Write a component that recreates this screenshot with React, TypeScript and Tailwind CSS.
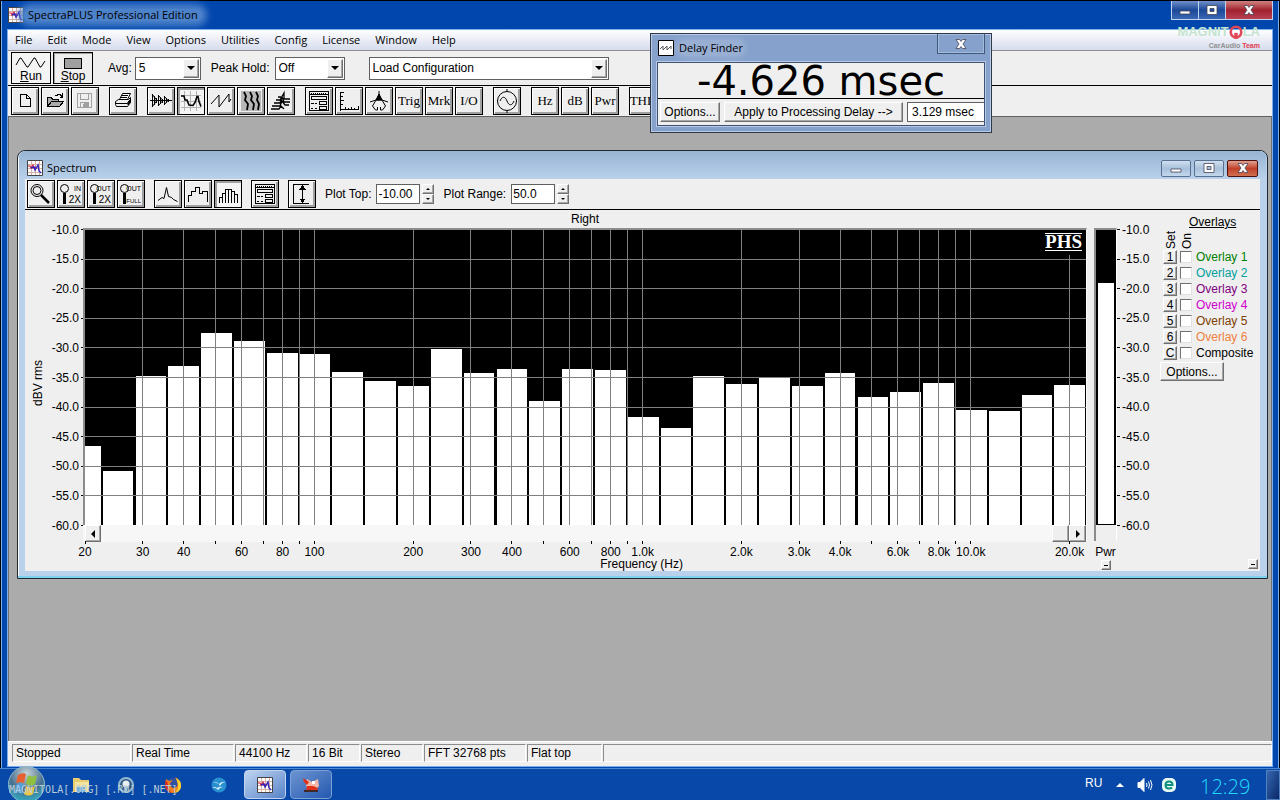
/**
 * @fileoverview Spectrum analyser desktop: main window, spectrum view and delay finder.
 */

import { Fragment } from 'react';
import type { ReactNode } from 'react';

const RAISED =
  'border border-black bg-[#efefef] shadow-[inset_1px_1px_0_#fff,inset_-2px_-2px_0_#a0a0a0] flex items-center justify-center';
const PRESSED =
  'border border-black bg-[#f4f4f4] shadow-[inset_2px_2px_0_#a0a0a0] flex items-center justify-center';
const SMALL_RAISED =
  'bg-[#efefef] border border-t-white border-l-white border-r-[#707070] border-b-[#707070] shadow-[inset_-1px_-1px_0_#a8a8a8] flex items-center justify-center';

/** Third-octave band levels in dBV, 20 Hz to 20 kHz. */
const LEVELS = [
  -46.6, -50.9, -34.8, -33.1, -27.5, -28.9, -30.9, -31.1, -34.1, -35.6, -36.6, -30.2, -34.3, -33.6,
  -39.0, -33.6, -33.9, -41.7, -43.6, -34.8, -36.1, -35.0, -36.5, -34.4, -38.3, -37.5, -36.0, -40.5,
  -40.7, -38.0, -36.3,
];

const DECADES = 3.05;
const DB_STEPS = [0, 1, 2, 3, 4, 5, 6, 7, 8, 9, 10];
const STEP_PX = 29.6;

const FREQS: number[] = [];
[10, 100, 1000, 10000].forEach((base) => {
  for (let n = 1; n < 10; n++) {
    const f = base * n;
    if (f >= 20 && f <= 20000) FREQS.push(f);
  }
});

const pct = (decades: number) => `${(decades / DECADES) * 100}%`;
const freqX = (f: number) => pct(Math.log10(f / 20));
const freqLabel = (f: number) => (f >= 1000 ? `${(f / 1000).toFixed(1)}k` : String(f));
const hasLabel = (f: number) => {
  const lead = Number(String(f)[0]);
  return lead !== 5 && lead !== 7 && lead !== 9;
};

const OVERLAYS = [
  { key: '1', name: 'Overlay 1', color: 'text-[#008000]' },
  { key: '2', name: 'Overlay 2', color: 'text-[#00a0a0]' },
  { key: '3', name: 'Overlay 3', color: 'text-[#800080]' },
  { key: '4', name: 'Overlay 4', color: 'text-[#d000d0]' },
  { key: '5', name: 'Overlay 5', color: 'text-[#804000]' },
  { key: '6', name: 'Overlay 6', color: 'text-[#f08040]' },
  { key: 'C', name: 'Composite', color: 'text-black' },
];

const MENUS = ['File', 'Edit', 'Mode', 'View', 'Options', 'Utilities', 'Config', 'License', 'Window', 'Help'];

const STATUS = [
  { text: 'Stopped', width: 'w-[119px]' },
  { text: 'Real Time', width: 'w-[102px]' },
  { text: '44100 Hz', width: 'w-[72px]' },
  { text: '16 Bit', width: 'w-[52px]' },
  { text: 'Stereo', width: 'w-[62px]' },
  { text: 'FFT 32768 pts', width: 'w-[102px]' },
  { text: 'Flat top', width: 'w-[75px]' },
  { text: '', width: 'flex-1' },
];

function Icon({ children }: { children: ReactNode }) {
  return (
    <svg
      viewBox="0 0 24 24"
      className="w-6 h-6 shrink-0"
      fill="none"
      stroke="#000"
      strokeWidth="1"
      shapeRendering="crispEdges"
      aria-hidden="true"
    >
      {children}
    </svg>
  );
}

interface Tool {
  label: string;
  icon?: ReactNode;
  pressed?: boolean;
}

const SettingsIcon = (
  <Icon>
    <path d="M2.5 2.5h19v19h-19zM2.5 5.5h19" />
    <path d="M4 4h16" strokeDasharray="1 1" />
    <path d="M4.5 7.5h15v3h-15zM12.5 12.5h7v3h-7zM12.5 17.5h7v3h-7z" />
    <path d="M4 14.5h3m1 0h2M4 19.5h2m2 0h2" />
  </Icon>
);

const MAIN_TOOLS: Tool[][] = [
  [
    { label: 'New', icon: <Icon><path d="M7.5 5.5h6l4 4v8h-10zM13.5 5.5v4h4" /></Icon> },
    {
      label: 'Open',
      icon: (
        <Icon>
          <path d="M4.5 17.5v-9h4l1 2h6v2M4.5 17.5l4-5h12l-4 5z" fill="#aaa" />
          <path d="M12 6.5h2l1-1h2l2 2M19.5 4v4h-3" />
        </Icon>
      ),
    },
    {
      label: 'Save',
      icon: (
        <Icon>
          <path d="M4.5 4.5h14v14h-14zM7.5 4.5v6h8v-6M7.5 18.5v-5h8v5M10.5 15v3" stroke="#a0a0a0" />
          <path d="M11 14h4v4h-4z" fill="#a0a0a0" stroke="none" />
        </Icon>
      ),
    },
  ],
  [
    {
      label: 'Print',
      icon: (
        <Icon>
          <g shapeRendering="auto">
            <path d="M8.5 10.5l3-6h8l-3 6" fill="#fff" />
            <path d="M4.5 12.5l3-2h10l2-2v5l-3 4h-11l-1-2zM4.5 14.5h12l3-4M11 6.5h6M10 8.5h6" />
            <path d="M17 13l2-2v3l-2 2z" fill="#000" />
          </g>
        </Icon>
      ),
    },
  ],
  [
    {
      label: 'Time series',
      icon: (
        <Icon>
          <path d="M1 11.5h22M3.5 5v13M5.5 7v9M7.5 9v5M9.5 6v11M11.5 8v7M13.5 9.500v4M15.5 7v9M17.5 9v5M19.5 10v3" />
          <path d="M3 5l5 6.500-5 6.500M9 6l5 5.500-5 5.500M15 7l4 4.500-4 4.500" shapeRendering="auto" />
        </Icon>
      ),
    },
    {
      label: 'Spectrum',
      pressed: true,
      icon: (
        <Icon>
          <path d="M2 6.5h20M2 12.5h20M2 18.5h20M5.5 2v20M11.5 2v20M17.5 2v20" stroke="#b4b4b4" />
          <path d="M2 7h3l1 4h2l2 5 4 .5 2-3 2-6 1 0 1 5 2 5" shapeRendering="auto" strokeWidth="1.600" />
        </Icon>
      ),
    },
    { label: 'Phase', icon: <Icon><path d="M2 15L10 6v12L20 5v8l2-3" shapeRendering="auto" /></Icon> },
    {
      label: 'Spectrogram',
      icon: (
        <Icon>
          <path d="M2 2h20v20H2z" fill="#b8b8b8" stroke="none" />
          <path
            d="M5 3l2 4-1 4 3 4-1 6M11 3l2 4-1 4 3 4-1 6M17 3l2 4-1 4 2 4-1 6"
            shapeRendering="auto"
            strokeWidth="1.800"
          />
        </Icon>
      ),
    },
    {
      label: '3-D surface',
      icon: (
        <Icon>
          <path
            d="M2 20h8l2-3 3 3M3 17h8l2-5 3 4h4M5 14h6l2-6 2 5h6M7 11h4l4-7v6h6M9 8h3"
            shapeRendering="auto"
            strokeWidth="1.300"
          />
        </Icon>
      ),
    },
  ],
  [
    { label: 'Processing settings', icon: SettingsIcon },
    {
      label: 'Scaling',
      icon: (
        <Icon>
          <path d="M3.5 3v18.500M4 3.500h3M4 7.500h2M4 11.500h3M4 15.500h2M4 20.500h18M8.500 18v2M11.500 19v1M14.500 18v2M17.500 19v1M21.500 17v3" />
        </Icon>
      ),
    },
    {
      label: 'Calibration',
      icon: (
        <Icon>
          <g shapeRendering="auto">
            <path d="M12 2v7M12 6L5.500 17l3 4h2v-3M12 6l6.500 11-3 4h-2v-3M3 13l6-2h6l6 2" />
            <path d="M12 5l3 6H9z" fill="#000" />
          </g>
        </Icon>
      ),
    },
    { label: 'Trig' },
    { label: 'Mrk' },
    { label: 'I/O' },
  ],
  [
    {
      label: 'Signal generator',
      icon: (
        <Icon>
          <g shapeRendering="auto">
            <circle cx="12" cy="12" r="9.500" />
            <path d="M12 0v2.500M12 21.500V24M5 12c2-5 5-5 7 0s5 5 7 0" />
          </g>
        </Icon>
      ),
    },
  ],
  [{ label: 'Hz' }, { label: 'dB' }, { label: 'Pwr' }],
  [{ label: 'THD' }],
];

/** Magnifier with a two-line caption, shared by the zoom buttons. */
function ZoomIcon({ top, bottom, small }: { top: string; bottom: string; small?: boolean }) {
  return (
    <Icon>
      <g shapeRendering="auto">
        <circle cx="5.500" cy="6.500" r="4" />
        <path d="M5.500 11v11" strokeWidth="3" />
      </g>
      <g stroke="none" fill="#000" fontFamily="Liberation Sans, sans-serif">
        <text x="22" y="9" fontSize="7" textAnchor="end">{top}</text>
        <text x="22" y="21" fontSize={small ? 6 : 10} textAnchor="end">{bottom}</text>
      </g>
    </Icon>
  );
}

const SPECTRUM_TOOLS: Tool[][] = [
  [
    {
      label: 'Zoom',
      icon: (
        <Icon>
          <g shapeRendering="auto">
            <circle cx="8" cy="8.500" r="6" />
            <circle cx="8" cy="8.500" r="4" />
            <path d="M12 13l8 8" strokeWidth="2.500" />
          </g>
        </Icon>
      ),
    },
    { label: 'Zoom in 2x', icon: <ZoomIcon top="IN" bottom="2X" /> },
    { label: 'Zoom out 2x', icon: <ZoomIcon top="OUT" bottom="2X" /> },
    { label: 'Zoom out full', icon: <ZoomIcon top="OUT" bottom="FULL" small /> },
  ],
  [
    {
      label: 'Line plot',
      icon: <Icon><path d="M2 18.500l4-3 2 1 2.500-11 2 9 3 1 2 2 4 2" shapeRendering="auto" /></Icon>,
    },
    { label: 'Step plot', icon: <Icon><path d="M2.500 20v-7h3v-4h4V5.500h4v6h3v-2h5V20" /></Icon> },
    {
      label: 'Bar plot',
      pressed: true,
      icon: <Icon><path d="M3.500 21v-6h3v6M6.500 15v-4h3v10M9.500 11V7.500h3V21M12.500 7.500h3V21M15.500 9.500h3V21M18.500 12.500h3V21" /></Icon>,
    },
  ],
  [{ label: 'Settings', icon: SettingsIcon }],
  [
    {
      label: 'Autoscale',
      icon: (
        <Icon>
          <path d="M3.500 2v20M3 2.500h16M3 21.500h16M12.500 3v18" />
          <path d="M10 7h5l-2.500-3zM10 17h5l-2.500 3z" fill="#000" />
        </Icon>
      ),
    },
  ],
];

function ToolGroups({ groups }: { groups: Tool[][] }) {
  return (
    <>
      {groups.map((group) => (
        <div key={group[0].label} className="flex gap-0.5">
          {group.map((tool) => (
            <button
              key={tool.label}
              type="button"
              aria-label={tool.label}
              className={`w-7 h-7 ${tool.pressed ? PRESSED : RAISED}`}
            >
              {tool.icon ?? (
                <span className="font-['Liberation_Serif',serif] text-[13px] leading-4">{tool.label}</span>
              )}
            </button>
          ))}
        </div>
      ))}
    </>
  );
}

function AppIcon() {
  return (
    <svg viewBox="0 0 16 16" className="w-4 h-4 shrink-0" aria-hidden="true">
      <path d="M.5.5h15v15H.5z" fill="#fff" stroke="#444" />
      <path d="M4.500 1v14M8.500 1v14M12.500 1v14M1 4.500h14M1 8.500h14M1 12.500h14" stroke="#d8b0a4" />
      <path d="M1 6h2l1 2 2-3 1 3 2-1" fill="none" stroke="#d02040" strokeWidth="1.200" />
      <path d="M4 8l3-1 1 3 3-5 1 6 2 2" fill="none" stroke="#3020c0" strokeWidth="1.400" />
    </svg>
  );
}

function Picker({ id, value, width }: { id: string; value: string; width: string }) {
  return (
    <div className={`relative h-[23px] ${width}`}>
      <select
        id={id}
        aria-label={value}
        defaultValue={value}
        className="appearance-none w-full h-full bg-white border border-[#606060] pl-[3px] pr-5 text-xs leading-4"
      >
        <option>{value}</option>
      </select>
      <span className={`absolute right-0.5 top-0.5 bottom-0.5 w-4 pointer-events-none ${SMALL_RAISED}`}>
        <svg viewBox="0 0 8 4" className="w-2 h-1" aria-hidden="true"><path d="M0 0h8L4 4z" /></svg>
      </span>
    </div>
  );
}

function Spinner({ id, label, value }: { id: string; label: string; value: string }) {
  return (
    <div className="flex items-center">
      <label htmlFor={id} className="mr-[5px]">{label}</label>
      <input id={id} defaultValue={value} className="w-11 h-5 bg-white border border-[#606060] pl-px text-xs" />
      <div className="ml-0.5 flex flex-col">
        <button type="button" aria-label={`${label} up`} className={`w-3 h-2.5 ${SMALL_RAISED}`}>
          <svg viewBox="0 0 4 2" className="w-1 h-0.5"><path d="M0 2h4L2 0z" /></svg>
        </button>
        <button type="button" aria-label={`${label} down`} className={`w-3 h-2.5 ${SMALL_RAISED}`}>
          <svg viewBox="0 0 4 2" className="w-1 h-0.5"><path d="M0 0h4L2 2z" /></svg>
        </button>
      </div>
    </div>
  );
}

function CaptionGlyph({ kind }: { kind: 'min' | 'max' | 'close' }) {
  return (
    <svg viewBox="0 0 14 12" className="w-3.5 h-3" aria-hidden="true">
      {kind === 'min' && <path d="M2 7h10v3H2z" fill="#fff" stroke="#445" strokeWidth=".8" />}
      {kind === 'max' && (
        <path d="M2 1.500h10v9H2zM5 4.500v3h4v-3z" fill="#fff" fillRule="evenodd" stroke="#445" strokeWidth=".8" />
      )}
      {kind === 'close' && (
        <path
          d="M2 1.500h3.500L7 3.500l1.500-2H12L9 6l3 4.500H8.500L7 8.500l-1.500 2H2L5 6z"
          fill="#fff"
          stroke="#445"
          strokeWidth=".8"
        />
      )}
    </svg>
  );
}

function DbAxis({ side }: { side: 'left' | 'right' }) {
  const left = side === 'left';
  return (
    <svg className={`shrink-0 h-[361px] text-xs ${left ? 'w-[58px]' : 'w-[43px]'}`}>
      {DB_STEPS.map((k) => {
        const y = 19.5 + k * STEP_PX;
        return (
          <Fragment key={k}>
            <line x1={left ? 56 : 0} x2={left ? 58 : 3} y1={y} y2={y} stroke="#000" shapeRendering="crispEdges" />
            <text x={left ? 54 : 5} y={y + 4} textAnchor={left ? 'end' : 'start'}>
              {`-${10 + k * 5}.0`}
            </text>
          </Fragment>
        );
      })}
      {left && (
        <text textAnchor="middle" transform="translate(17 173) rotate(-90)">
          dBV rms
        </text>
      )}
    </svg>
  );
}

/** Plot of band levels on a logarithmic frequency axis. */
function SpectrumPlot() {
  return (
    <div className="flex-1 min-w-0 flex flex-col">
      <div className="h-[18px] text-center leading-[18px]">Right</div>
      <div className="relative border-t-2 border-l-2 border-[#8c8c8c] border-r border-r-white">
        <svg className="block w-full h-[295px] bg-black" shapeRendering="crispEdges">
          {LEVELS.map((level, i) => {
            const from = i === 0 ? 0 : i * 0.1 - 0.046;
            const top = ((-10 - level) / 5) * STEP_PX - 1;
            return (
              <rect key={i} x={pct(from)} y={top} width={pct(i * 0.1 + 0.0475 - from)} height={296 - top} fill="#fff" />
            );
          })}
          {DB_STEPS.slice(1, 10).map((k) => (
            <line key={k} x1="0" x2="100%" y1={k * STEP_PX - 0.5} y2={k * STEP_PX - 0.5} stroke="#808080" />
          ))}
          {FREQS.slice(1).map((f) => (
            <line key={f} x1={freqX(f)} x2={freqX(f)} y1="0" y2="100%" stroke="#808080" />
          ))}
        </svg>
        <div className="absolute top-0 right-1 pt-[3px] pb-1 bg-black">
          <div className="border-y border-white text-white font-bold text-[19px] leading-4 font-['Liberation_Serif',serif]">
            PHS
          </div>
        </div>
      </div>
      <div className="flex h-[17px] pl-0.5 bg-[#f7f7f7]">
        <button type="button" aria-label="Scroll left" className={`w-4 ${SMALL_RAISED}`}>
          <svg viewBox="0 0 4 8" className="w-1 h-2"><path d="M4 0v8L0 4z" /></svg>
        </button>
        <button type="button" aria-label="Scroll position" className={`ml-auto w-[17px] ${SMALL_RAISED}`} />
        <button type="button" aria-label="Scroll right" className={`mr-px w-[17px] ${SMALL_RAISED}`}>
          <svg viewBox="0 0 4 8" className="w-1 h-2"><path d="M0 0v8l4-4z" /></svg>
        </button>
      </div>
      <div className="pl-0.5 pr-px">
        <svg className="block w-full h-[29px] overflow-visible text-xs">
          {FREQS.map((f) => (
            <Fragment key={f}>
              <line x1={freqX(f)} x2={freqX(f)} y1="-1" y2="2" stroke="#000" shapeRendering="crispEdges" />
              {hasLabel(f) && (
                <text x={freqX(f)} y="14" textAnchor="middle">
                  {freqLabel(f)}
                </text>
              )}
            </Fragment>
          ))}
          <text x="55.6%" y="26" textAnchor="middle">
            Frequency (Hz)
          </text>
        </svg>
      </div>
    </div>
  );
}

function PowerMeter() {
  return (
    <div className="ml-[7px] w-[23px] shrink-0 flex flex-col items-center pt-[18px]">
      <div className="w-full border-t-2 border-l-2 border-[#8c8c8c] border-r border-r-white">
        <div className="h-[295px] bg-black flex flex-col justify-end px-0.5 pb-px">
          <div className="bg-white h-[241px]" />
        </div>
        <div className="h-4" />
      </div>
      <div className="leading-4 mt-[3px]">Pwr</div>
      <button type="button" aria-label="Collapse power meter" className={`w-2.5 h-2.5 text-xs ${SMALL_RAISED}`}>
        <span className="w-1 h-px bg-black" />
      </button>
    </div>
  );
}

function OverlayPanel() {
  return (
    <aside className="w-[100px] shrink-0 flex flex-col">
      <div className="pt-1 pl-[29px] underline leading-4">Overlays</div>
      <div className="flex gap-1 h-[19px] pl-[5px] items-end text-xs leading-3">
        <span className="w-3 [writing-mode:vertical-rl] rotate-180">Set</span>
        <span className="w-3 [writing-mode:vertical-rl] rotate-180">On</span>
      </div>
      <ul>
        {OVERLAYS.map((o) => (
          <li key={o.key} className="flex items-center h-4 pl-[3px]">
            <button type="button" aria-label={`Set ${o.name}`} className={`w-3.5 h-3.5 text-xs ${SMALL_RAISED}`}>
              {o.key}
            </button>
            <input
              id={`overlay-${o.key}`}
              type="checkbox"
              className="appearance-none ml-[3px] w-3 h-3 bg-white border border-t-[#707070] border-l-[#707070] border-[#e0e0e0]"
            />
            <label htmlFor={`overlay-${o.key}`} className={`ml-1 ${o.color}`}>
              {o.name}
            </label>
          </li>
        ))}
      </ul>
      <button type="button" className={`mt-px w-16 h-[19px] ${SMALL_RAISED}`}>
        Options...
      </button>
      <button type="button" aria-label="Collapse overlays" className={`mt-auto mb-0.5 mr-0.5 self-end w-2.5 h-2.5 ${SMALL_RAISED}`}>
        <span className="w-1 h-px bg-black" />
      </button>
    </aside>
  );
}

function SpectrumWindow() {
  return (
    <section className="mt-[33px] ml-2 mr-[3px] rounded-t-lg border border-[#202830] bg-[#b9d1ea] px-[7px] pb-[7px] shadow-[inset_0_-2px_0_#7cd0f0,inset_1px_1px_0_#fff]">
      <header className="-mx-[6px] px-[8px] h-7 flex items-center gap-1 rounded-t-md bg-gradient-to-b from-[#98b4d4] to-[#b9d1ea]">
        <span className="pt-1.5"><AppIcon /></span>
        <h2 className="pt-1.5 font-['Open_Sans',sans-serif] text-[11px]">Spectrum</h2>
        <div className="ml-auto flex gap-[3px] pt-1.5">
          {(['min', 'max'] as const).map((kind) => (
            <button
              key={kind}
              type="button"
              aria-label={kind}
              className="w-[30px] h-[17px] flex items-center justify-center rounded-xs border border-[#5a7090] bg-gradient-to-b from-[#d0e0f0] via-[#a8c0dc] to-[#c4d8ec]"
            >
              <CaptionGlyph kind={kind} />
            </button>
          ))}
          <button
            type="button"
            aria-label="Close spectrum"
            className="w-[31px] h-[17px] flex items-center justify-center rounded-xs border border-[#501010] bg-gradient-to-b from-[#e0a090] via-[#c04028] to-[#d07050]"
          >
            <CaptionGlyph kind="close" />
          </button>
        </div>
      </header>
      <div className="bg-[#efefef]">
        <div className="flex items-center h-[31px] pl-[2px] gap-[9px] border-b border-black">
          <ToolGroups groups={SPECTRUM_TOOLS} />
          <Spinner id="plot-top" label="Plot Top:" value="-10.00" />
          <Spinner id="plot-range" label="Plot Range:" value="50.0" />
        </div>
        <div className="flex">
          <DbAxis side="left" />
          <SpectrumPlot />
          <PowerMeter />
          <DbAxis side="right" />
          <OverlayPanel />
        </div>
      </div>
    </section>
  );
}

function DelayFinder() {
  return (
    <section className="absolute left-[650px] top-[33px] w-[342px] border border-[#303848] bg-[#86a2cc] px-1.5 pb-1.5 shadow-[inset_0_0_0_1px_#b8cce8]">
      <header className="flex h-7 items-center gap-1 pl-px">
        <svg viewBox="0 0 16 16" className="w-4 h-4" aria-hidden="true">
          <path d="M.5.5h15v15H.5z" fill="#fff" stroke="#000" />
          <path d="M2 9l3-3v4l4-4v4l4-4v3" fill="none" stroke="#555" />
        </svg>
        <h2 className="px-px font-['Open_Sans',sans-serif] text-[11px] rounded-full bg-white/15 shadow-[0_0_6px_2px_rgba(255,255,255,0.15)]">
          Delay Finder
        </h2>
        <button
          type="button"
          aria-label="Close delay finder"
          className="ml-auto self-start w-12 h-5 flex items-center justify-center border border-t-0 border-[#40587c] shadow-[inset_0_0_0_1px_#a4bcdc]"
        >
          <CaptionGlyph kind="close" />
        </button>
      </header>
      <div className="bg-[#efefef] border border-[#405070] shadow-[0_0_0_1px_#b8cce8]">
        <div className="h-9 leading-9 text-center text-[40px] border-b border-black font-['DejaVu_Sans',sans-serif]">
          -4.626 msec
        </div>
        <div className="flex items-center gap-1 pl-0.5 h-[26px]">
          <button type="button" className={`w-[60px] h-5 ${SMALL_RAISED}`}>Options...</button>
          <button type="button" className={`flex-1 h-5 whitespace-nowrap ${SMALL_RAISED}`}>
            Apply to Processing Delay --&gt;
          </button>
          <input
            aria-label="Processing delay"
            defaultValue="3.129 msec"
            className="w-[77px] h-5 bg-white border border-[#606060] border-r-0 pl-1 text-xs"
          />
        </div>
      </div>
    </section>
  );
}

function TitleBar() {
  return (
    <header className="flex h-7 items-center pl-px">
      <AppIcon />
      <h1 className="px-1 font-['Open_Sans',sans-serif] text-[11px] leading-3 rounded-full bg-[#4c82ca] shadow-[0_0_7px_5px_#4c82ca]">
        SpectraPLUS Professional Edition
      </h1>
      <div className="ml-auto self-start flex border border-t-0 border-[#c0d4f0]">
        {(['min', 'max'] as const).map((kind) => (
          <button
            key={kind}
            type="button"
            aria-label={kind}
            className="w-[27px] h-[18px] flex items-center justify-center border-r border-[#c0d4f0] bg-gradient-to-b from-[#7090c8] via-[#1c4898] to-[#3868b4]"
          >
            <CaptionGlyph kind={kind} />
          </button>
        ))}
        <button
          type="button"
          aria-label="Close"
          className="w-[46px] h-[18px] flex items-center justify-center bg-gradient-to-b from-[#d08080] via-[#a02030] to-[#b84050]"
        >
          <CaptionGlyph kind="close" />
        </button>
      </div>
    </header>
  );
}

function Watermark() {
  return (
    <div className="absolute right-5 top-[22px] flex flex-col items-end pointer-events-none">
      <div className="flex items-center font-bold text-[13px] leading-5 text-[#c4e4d0]">
        MAGNIT
        <svg viewBox="0 0 16 16" className="w-3.5 h-4" aria-hidden="true">
          <circle cx="8" cy="8" r="6" fill="none" stroke="#e04858" strokeWidth="3" />
          <path d="M6 9h4v7H6z" fill="#e04858" />
        </svg>
        LA
      </div>
      <div className="text-[7px] leading-2 font-bold text-[#909090]">
        CarAudio <span className="text-[#e04050]">Team</span>
      </div>
    </div>
  );
}

function Taskbar() {
  return (
    <footer className="relative h-8 flex items-center bg-[#0848a8] border-t border-[#4c88d0] text-white">
      <button type="button" aria-label="Start" className="ml-2 w-[37px] h-[37px]">
        <svg viewBox="0 0 37 37" aria-hidden="true">
          <defs>
            <radialGradient id="orb" cx=".5" cy=".2" r=".8">
              <stop offset="0" stopColor="#c8d4d8" />
              <stop offset=".6" stopColor="#487090" />
              <stop offset="1" stopColor="#30b0c8" />
            </radialGradient>
          </defs>
          <circle cx="18.500" cy="18.500" r="18" fill="url(#orb)" stroke="#90b8c8" />
          <path d="M10 9q4-3 8-1l-2 9q-4-2-8 0z" fill="#e86030" />
          <path d="M20 9q4 3 9 0l-2 9q-4 3-9 0z" fill="#90c040" />
          <path d="M8 19q4-3 8 0l-2 9q-4-3-8 0z" fill="#50a0e0" />
          <path d="M18 20q4 3 9 0l-2 8q-4 3-9 0z" fill="#f0c840" />
        </svg>
      </button>
      <button type="button" aria-label="Explorer" className="ml-[27px]">
        <svg viewBox="0 0 18 18" className="w-[18px] h-[18px]" aria-hidden="true">
          <path d="M1 2h6l2 2h8v12H1z" fill="#e8cc70" />
          <path d="M3 6h14v10H3z" fill="#f4e4a0" />
          <path d="M5 11h8v5H5z" fill="#70b0e0" />
        </svg>
      </button>
      <button type="button" aria-label="Media" className="ml-[27px]">
        <svg viewBox="0 0 18 18" className="w-[18px] h-[18px]" aria-hidden="true">
          <circle cx="9" cy="9" r="7" fill="#305880" stroke="#90b8d0" strokeWidth="2" />
          <circle cx="9" cy="8" r="3.500" fill="#e8f0f4" />
          <path d="M7 10h4l-1 5H8z" fill="#b0c8d8" />
        </svg>
      </button>
      <button type="button" aria-label="Firefox" className="ml-[29px]">
        <svg viewBox="0 0 18 18" className="w-[18px] h-[18px]" aria-hidden="true">
          <circle cx="9" cy="9" r="7" fill="#3050a0" />
          <path d="M2 3l3 2 4-1-3 3q0 5 4 5 5-1 3-7l-2-4q6 3 6 9-1 7-8 7-8 0-8-9z" fill="#f08020" />
          <path d="M12 2q6 3 5 9-1 5-6 6 4-4 3-9z" fill="#f8d030" />
          <path d="M2 4q-3 7 3 12l3 1q-5-4-4-9z" fill="#d02828" />
        </svg>
      </button>
      <button type="button" aria-label="OpenOffice" className="ml-7">
        <svg viewBox="0 0 18 18" className="w-[18px] h-[18px]" aria-hidden="true">
          <circle cx="9" cy="9" r="7.500" fill="#2890d0" />
          <path d="M3 7q4-2 6 1 3-3 7-2-4 0-6 4-2-4-7-3zM2 12q3-2 5 0 3-2 6-1-3 0-5 3-2-3-6-2z" fill="#e0f4fc" />
        </svg>
      </button>
      <button type="button" aria-label="SpectraPLUS" className="ml-4 w-[42px] h-[29px] flex items-center justify-center rounded-sm border border-[#c0d4f0] bg-gradient-to-br from-[#c0d4f0] to-[#5884c8]">
        <AppIcon />
      </button>
      <button type="button" aria-label="Paint tool" className="ml-1 w-[42px] h-[29px] flex items-center justify-center rounded-sm border border-[#7ca0d8] bg-gradient-to-br from-[#6c94d0] to-[#2458b0]">
        <svg viewBox="0 0 18 18" className="w-[18px] h-[18px]" aria-hidden="true">
          <path d="M5 3l5 3 6-3 1 7-4 5H6L4 9z" fill="#f0b8a8" />
          <path d="M1 2l6 4-2 3-3-3zM5 10h6l5 2-1 3H4z" fill="#e03018" />
          <path d="M2 14h14v2H2z" fill="#402828" />
          <path d="M10 5h3v3h-3z" fill="#fff" />
        </svg>
      </button>
      <div className="ml-auto flex items-center">
        <span className="text-xs pb-1 w-[31px]">RU</span>
        <svg viewBox="0 0 8 4" className="w-2 h-1" aria-hidden="true"><path d="M0 4h8L4 0z" fill="#fff" /></svg>
        <svg viewBox="0 0 16 16" className="ml-[13px] w-4 h-4" fill="none" stroke="#fff" aria-hidden="true">
          <path d="M1 5.500h2l4-4v13l-4-4H1z" fill="#fff" />
          <path d="M9.500 6q1 2 0 4M11.500 4.500q2 3.500 0 7M13.500 3q3 5 0 10" />
        </svg>
        <svg viewBox="0 0 16 16" className="ml-2 w-4 h-4" aria-hidden="true">
          <rect x="1" y="1" width="14" height="14" rx="5" fill="#e8fcf4" />
          <path d="M4.500 8h7q0-3.500-3.500-3.500T4.500 8t3.500 3.500q2 0 3-1" fill="none" stroke="#109080" strokeWidth="2" />
        </svg>
        <time className="ml-[23px] w-[66px] pt-1 text-xl leading-6 text-[#20dcff] font-['Open_Sans',sans-serif] font-light">
          12:29
        </time>
        <button
          type="button"
          aria-label="Show desktop"
          className="w-3.5 h-[30px] border border-[#5080c0] bg-gradient-to-br from-[#3868b0] to-[#082868]"
        />
      </div>
      <div className="absolute left-[9px] bottom-1 text-[10px] leading-3 font-['DejaVu_Sans_Mono',monospace] text-[#b8ccd8] pointer-events-none">
        MAGNITOLA[.ORG] [.RU] [.NET]
      </div>
    </footer>
  );
}

export default function App() {
  return (
    <div className="relative min-h-screen flex flex-col bg-[#0046ad] font-['Liberation_Sans',Arial,sans-serif] text-xs leading-4 text-black">
      <div className="flex-1 flex flex-col border border-b-0 border-black">
        <div className="flex-1 flex flex-col border-x border-[#7cb0ec] px-[5px] pb-px">
          <TitleBar />
          <main className="flex-1 flex flex-col border border-[#7cb0ec] bg-[#efefef]">
            <nav className="flex items-center h-[21px] gap-[15px] pl-[7px] bg-gradient-to-b from-white to-[#d6dcee] border-b border-[#909090] font-['Open_Sans',sans-serif] text-[11px]">
              {MENUS.map((m) => (
                <button key={m} type="button">{m}</button>
              ))}
            </nav>
            <div className="flex items-center h-[35px] pl-[3px] border-b border-black">
              <button type="button" className="w-10 h-8 border border-black bg-[#f4f4f4] flex flex-col items-center justify-between">
                <svg viewBox="0 0 32 14" className="mt-0.5 w-8 h-3.5" fill="none" stroke="#000" aria-hidden="true">
                  <path d="M1 10L5 3h1l6 9h1l6-9h1l5 9h1l4-6" />
                </svg>
                <span className="leading-[14px]"><u>R</u>un</span>
              </button>
              <button
                type="button"
                className="ml-0.5 w-10 h-8 border border-black bg-[#efefef] shadow-[inset_1px_1px_0_#a0a0a0] flex flex-col items-center justify-between pt-[5px]"
              >
                <span className="w-[18px] h-[11px] bg-[#a0a0a0] border border-black" />
                <span className="leading-[14px]"><u>S</u>top</span>
              </button>
              <label htmlFor="avg" className="ml-[15px] mr-[3px]">Avg:</label>
              <Picker id="avg" value="5" width="w-[66px]" />
              <label htmlFor="peak" className="ml-2.5 mr-[5px]">Peak Hold:</label>
              <Picker id="peak" value="Off" width="w-[70px]" />
              <div className="ml-6">
                <Picker id="config" value="Load Configuration" width="w-60" />
              </div>
            </div>
            <div className="flex items-center h-[31px] pl-[3px] gap-2.5 border-b border-[#606060]">
              <ToolGroups groups={MAIN_TOOLS} />
            </div>
            <div className="flex-1 bg-[#ababab] border-x border-[#707070]">
              <SpectrumWindow />
            </div>
            <div className="flex h-[25px] items-start pt-0.5 pl-1 gap-px border-t border-white">
              {STATUS.map((cell) => (
                <div
                  key={cell.text}
                  className={`${cell.width} h-[18px] pl-[3px] border border-[#8c8c8c] border-b-white border-r-white leading-4 whitespace-nowrap`}
                >
                  {cell.text}
                </div>
              ))}
            </div>
          </main>
        </div>
      </div>
      <Taskbar />
      <DelayFinder />
      <Watermark />
    </div>
  );
}
